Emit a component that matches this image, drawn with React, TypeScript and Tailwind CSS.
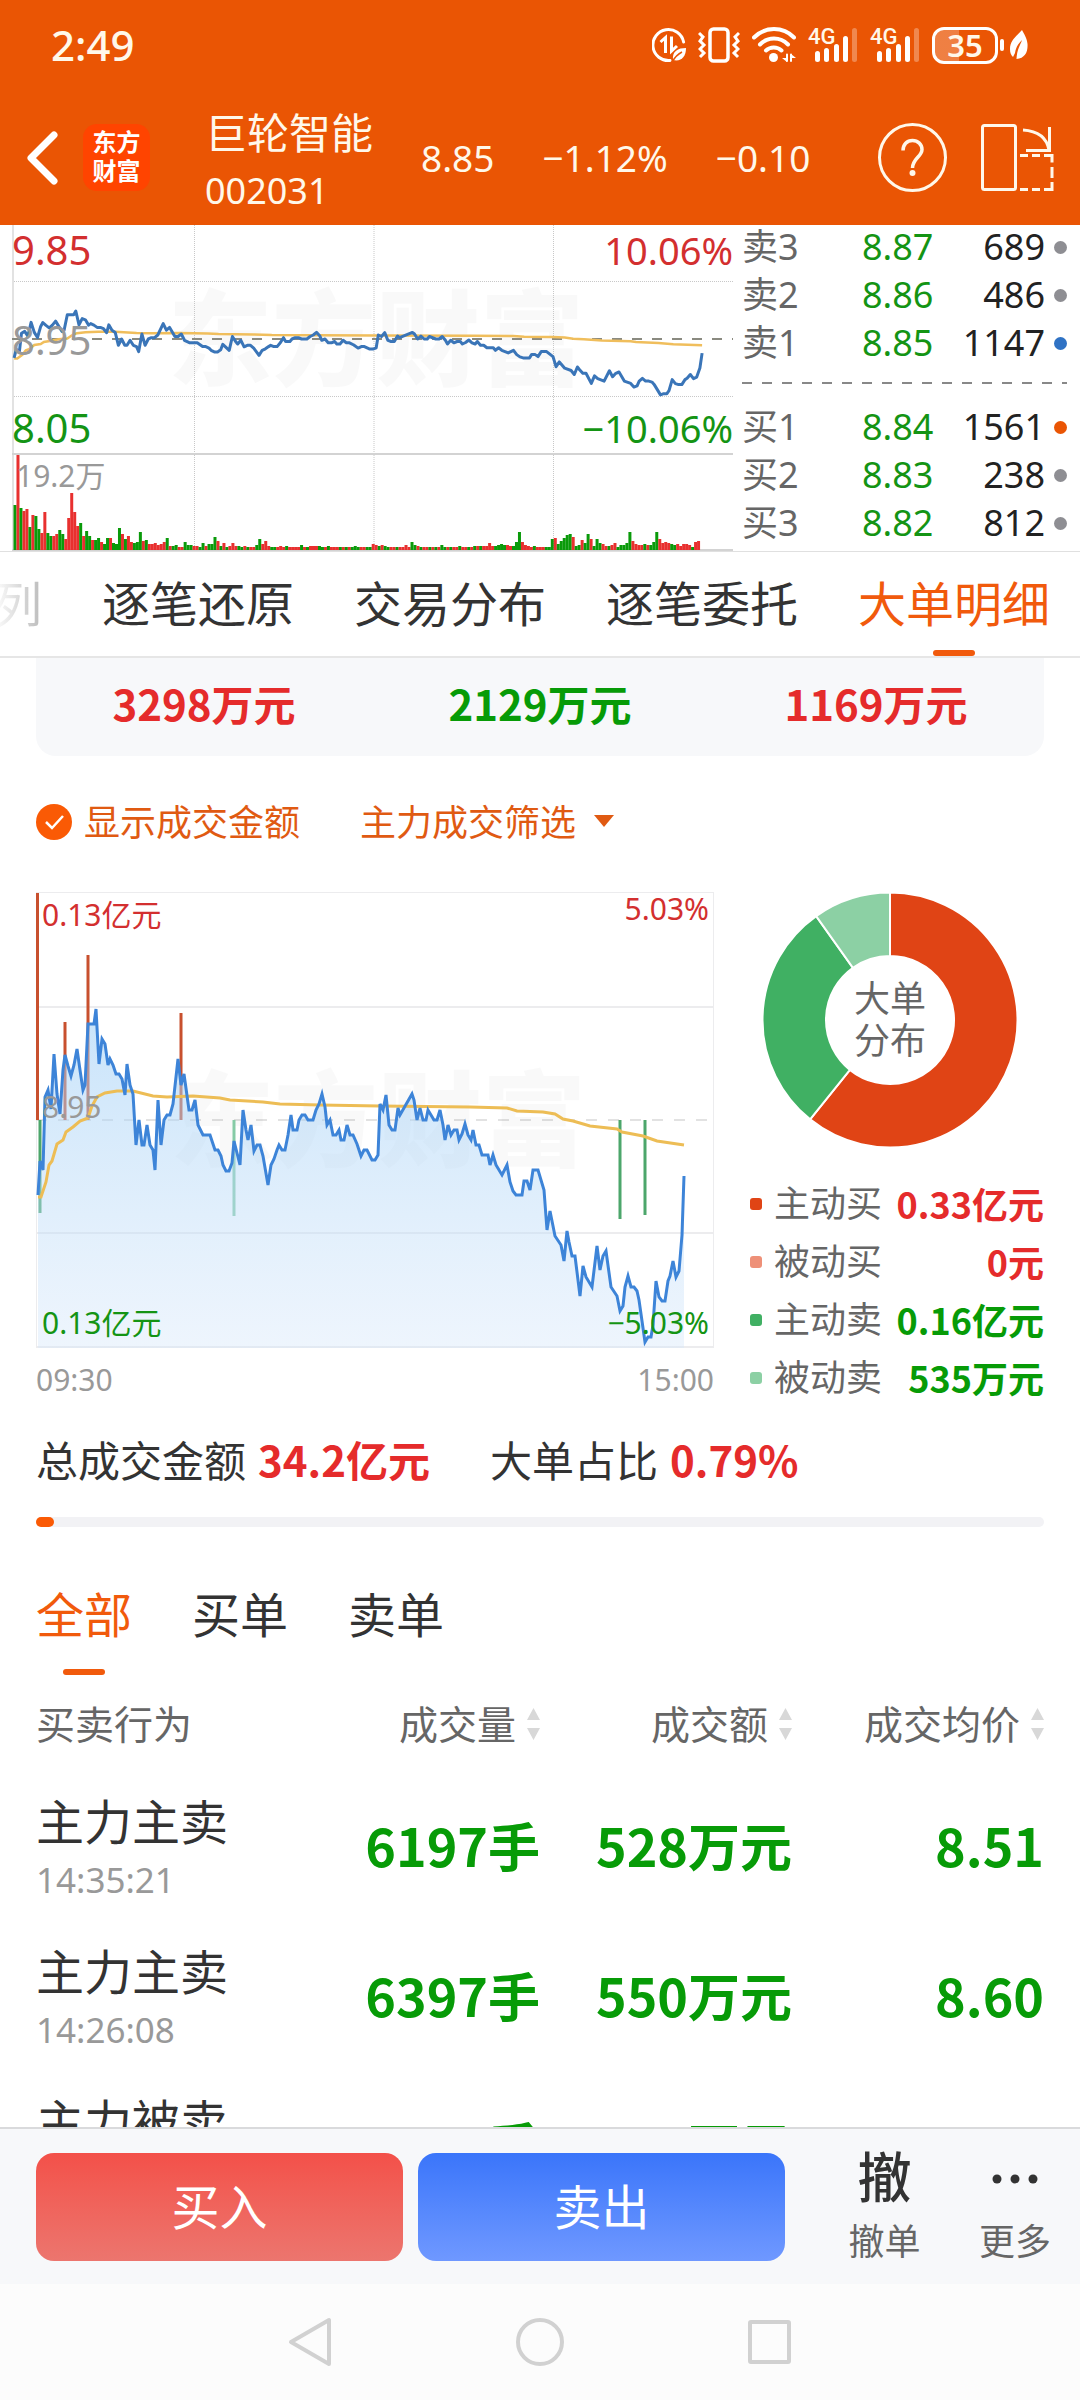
type Point = [number, number];

const CJK = "font-['Noto_Sans_CJK_SC',sans-serif]";

// x offset in the session, distance below the previous close
const price: Point[] = [
  [1, 75], [3, 41], [6, 50], [8, -23], [11, -30], [14, -11], [17, -66], [20, -26], [23, -6], [26, -50],
  [28, -65], [31, -54], [34, -44], [37, -55], [40, -71], [43, -50], [46, -30], [48, -35], [51, -96], [57, -96],
  [59, -111], [62, -56], [65, -81], [68, -76], [71, -55], [73, -61], [76, -55], [79, -46], [82, -46], [85, -41],
  [88, -25], [90, -56], [93, -35], [96, -26], [99, 25], [102, 0], [105, 25], [107, 25], [110, 5], [113, 25],
  [116, 30], [118, 50], [121, -20], [124, 25], [127, 0], [130, -5], [133, -5], [136, -16], [141, -61], [144, -35],
  [147, -46], [152, -10], [155, -10], [158, -20], [161, 5], [166, 15], [173, 15], [178, 30], [181, 30], [184, 36],
  [186, 45], [189, 51], [192, 51], [195, 43], [197, 21], [203, 45], [206, -10], [209, 10], [211, 20], [214, 5],
  [217, 31], [220, 25], [223, 25], [226, 36], [231, 65], [234, 45], [237, 39], [240, 30], [242, 25], [245, 30],
  [248, 30], [251, 15], [254, -5], [256, 10], [260, 10], [262, 0], [265, -5], [268, -5], [271, 0], [276, 0],
  [279, -10], [282, -16], [285, -26], [288, -13], [290, 5], [293, 0], [296, 15], [299, 15], [302, 10], [304, 20],
  [307, 20], [310, 5], [313, 15], [316, 15], [320, 24], [324, 36], [327, 30], [330, 30], [335, 40], [338, 40],
  [341, 35], [343, -16], [346, -10], [349, -25], [352, 5], [355, 10], [358, 10], [361, -12], [363, -5], [375, -26],
  [377, -20], [380, 0], [383, -12], [386, 0], [389, 0], [391, -10], [397, 0], [400, 0], [403, -10], [406, 5],
  [408, 20], [411, 5], [414, 15], [417, 10], [420, 10], [422, 20], [425, 14], [428, 4], [431, 15], [434, 20],
  [436, 10], [439, 25], [442, 25], [445, 35], [451, 35], [453, 45], [456, 35], [459, 45], [465, 55], [470, 45],
  [473, 62], [476, 71], [479, 75], [485, 75], [487, 61], [490, 61], [493, 70], [496, 50], [501, 50], [507, 70],
  [510, 110], [513, 91], [515, 101], [518, 116], [524, 125], [527, 141], [530, 111], [532, 122], [535, 136], [538, 136],
  [543, 176], [546, 146], [549, 157], [555, 167], [560, 126], [563, 150], [566, 136], [569, 131], [574, 167], [580, 176],
  [583, 191], [586, 186], [588, 167], [591, 156], [594, 167], [597, 167], [600, 171], [602, 180], [608, 222], [611, 217],
  [614, 217], [616, 205], [619, 161], [622, 177], [625, 181], [628, 181], [631, 161], [633, 156], [636, 141], [639, 157],
  [642, 151], [645, 115], [647, 56],
];

const average: Point[] = [
  [1, 77], [4, 77], [9, 62], [12, 45], [15, 41], [20, 24], [26, 20], [29, 12], [36, 7], [43, 1], [51, -2],
  [55, -14], [60, -23], [68, -27], [80, -29], [96, -29], [116, -24], [130, -23], [156, -24], [183, -22],
  [193, -20], [226, -18], [243, -16], [283, -15], [343, -14], [433, -13], [470, -12], [480, -9], [506, -8],
  [518, -6], [526, -1], [536, 1], [553, 6], [580, 9], [585, 12], [606, 16], [620, 21], [647, 25],
];

// r = up minute, g = down minute, followed by the bar height
const volume = (
  "g45 r95 g42 r39 r41 g23 r35 g34 g21 r17 r38 g17 g14 r14 r16 g20 g16 r11 r32 r57 r38 r24 g27 r14 g19 g14 r10 g10 g12 r8 " +
  "g6 g12 r12 g7 g6 g22 r16 g11 r14 r8 g7 g8 g18 r9 g10 r6 r6 r7 r5 r6 r8 g12 r4 g4 g5 r3 r3 g8 g5 g5 " +
  "r4 r4 g3 g7 r4 g6 g6 g13 r9 g4 r7 g3 r4 r7 r4 g4 g3 r4 g3 r3 r3 g5 g11 r6 r9 r4 g3 g3 r3 r4 " +
  "r3 g4 r3 r3 r3 r3 g5 r3 g3 r4 r4 r4 g4 g3 r3 g4 r3 r3 r3 g3 r3 g3 r3 g3 g4 g3 r3 r3 g3 g3 " +
  "r6 r5 g4 r5 g4 g3 r3 r3 g3 r3 r3 r5 r3 g8 g5 r4 g3 r3 r3 g3 r3 g3 r3 g5 g3 r3 g3 r3 r3 g4 " +
  "r3 r3 g3 r3 g4 r4 g4 r4 r4 r7 r4 g4 g5 g6 g5 r5 r4 g4 g8 g18 r8 r5 r4 r3 g4 r3 r3 r3 g3 g3 " +
  "g11 r12 g6 g9 g12 g15 g16 r13 g4 g5 r10 g7 g16 r11 g4 g11 g7 r6 r4 g4 r5 r7 g3 g5 g5 g7 g18 r9 r6 r5 " +
  "r5 g6 r5 g5 g8 g18 r11 r7 r8 r7 g6 g5 r6 r4 r6 r6 r5 g3 r8 r9"
).split(" ");

const sells = [
  { label: "卖3", price: "8.87", qty: 689, dot: "bg-[#8e8e93]" },
  { label: "卖2", price: "8.86", qty: 486, dot: "bg-[#8e8e93]" },
  { label: "卖1", price: "8.85", qty: 1147, dot: "bg-[#2f72c4]" },
];

const buys = [
  { label: "买1", price: "8.84", qty: 1561, dot: "bg-[#ea5504]" },
  { label: "买2", price: "8.83", qty: 238, dot: "bg-[#8e8e93]" },
  { label: "买3", price: "8.82", qty: 812, dot: "bg-[#8e8e93]" },
];

const bigOrders = [
  { label: "主动买", value: "0.33亿元", dot: "bg-[#e04415]", color: "text-[#e52b2b]" },
  { label: "被动买", value: "0元", dot: "bg-[#ee9078]", color: "text-[#e52b2b]" },
  { label: "主动卖", value: "0.16亿元", dot: "bg-[#40b063]", color: "text-[#079b07]" },
  { label: "被动卖", value: "535万元", dot: "bg-[#8cd0a4]", color: "text-[#079b07]" },
];

const trades = [
  { name: "主力主卖", time: "14:35:21", qty: "6197手", amount: "528万元", avg: "8.51" },
  { name: "主力主卖", time: "14:26:08", qty: "6397手", amount: "550万元", avg: "8.60" },
  { name: "主力被卖", time: "", qty: "手", amount: "万元", avg: "" },
];

function toLine(points: Point[], x0: number, y0: number, sx: number, sy: number) {
  return points.map(([x, y]) => `${(x0 + x * sx).toFixed(1)},${(y0 + y * sy).toFixed(1)}`).join(" ");
}

function Signal() {
  return (
    <div className="relative h-[36px] w-[50px]">
      <span className="absolute left-0 top-0 font-['Roboto',sans-serif] text-[22px] leading-[20px] font-medium">4G</span>
      <svg viewBox="0 0 50 36" className="h-full w-full" fill="#fff">
        <rect x="7" y="24" width="5" height="11" rx="2.5" />
        <rect x="16" y="21" width="5" height="14" rx="2.5" />
        <rect x="26" y="17" width="5" height="18" rx="2.5" />
        <rect x="35" y="9" width="5" height="26" rx="2.5" />
        <rect x="44" y="1" width="5" height="34" rx="2.5" opacity="0.3" />
      </svg>
    </div>
  );
}

function StatusBar() {
  return (
    <div className="flex h-[90px] items-center justify-between pl-[51px] pr-[52px]">
      <span className="text-[42px] leading-none font-medium">2:49</span>
      <div className="flex items-center gap-3">
        {/* Data saver */}
        <svg viewBox="0 0 34 36" className="h-[36px] w-[34px]" fill="none" stroke="#fff">
          <path d="M18 33.5A15.5 15.5 0 1 1 31.6 15" strokeWidth="3" strokeLinecap="round" />
          <path d="M8.5 15l5-4.500V26" strokeWidth="3" />
          <path d="M19.500 9.500V24l5.500-5" strokeWidth="3" />
          <path d="M34 21c-8 0-14 3-13 12 8 2 13-3 13-12z" fill="#fff" stroke="none" />
          <path d="M20 35c3-5 6-8 10-10" stroke="#ea5504" strokeWidth="1.500" />
        </svg>
        {/* Vibrate */}
        <svg viewBox="0 0 42 36" className="h-[36px] w-[42px]" fill="none" stroke="#fff" strokeWidth="3.500">
          <rect x="12" y="2" width="18" height="32" rx="3.500" />
          <path d="M1 6l4 4-3 4 4 4-4 4 4 4-4 4M41 6l-4 4 3 4-4 4 4 4-4 4 4 4" strokeWidth="3" />
        </svg>
        {/* Wifi */}
        <svg viewBox="0 0 44 36" className="h-[36px] w-[44px]" fill="none" stroke="#fff" strokeWidth="4" strokeLinecap="round">
          <path d="M2 10.500a28 28 0 0 1 40 0M8 17.500a19.500 19.500 0 0 1 28 0M14 23.500a11.500 11.500 0 0 1 15.500 0" />
          <circle cx="21.500" cy="30.500" r="4.500" fill="#fff" stroke="none" />
          <path d="M35 27v8l-5-4h5M39 35v-8l5 4h-5" fill="#fff" stroke="none" />
          <path d="M35 27.500v6.500M39 27.500v6.500" strokeWidth="2" />
        </svg>
        <Signal />
        <Signal />
        {/* Battery */}
        <div className="flex items-center gap-[6px]">
          <div className="flex items-center gap-[2px]">
            <div className="flex h-[37px] w-[66px] items-center justify-center rounded-[12px] border-[3px] border-white bg-linear-to-r from-white/25 from-40% to-transparent to-40% text-[31px] leading-none font-semibold">
              35
            </div>
            <div className="h-[12px] w-[4px] rounded-full bg-white" />
          </div>
          <svg viewBox="0 0 18 30" className="h-[30px] w-[18px]" fill="#fff">
            <path d="M12 0C6 7 0 10 0 19c0 4 1 6 3 8l2-4C6 17 8 14 12 10c-2 6-5 9-5.500 19C15 28 18 22 17.500 14 17 8 14 4 12 0z" />
          </svg>
        </div>
      </div>
    </div>
  );
}

function Header() {
  return (
    <header className="bg-[#ea5504] text-[#fff8ea]">
      <StatusBar />
      <div className="flex h-[135px] items-center pl-[27px] pr-[26px]">
        <button type="button" aria-label="返回">
          <svg viewBox="0 0 31 54" className="h-[54px] w-[31px]" fill="none" stroke="#fff" strokeWidth="7" strokeLinecap="round" strokeLinejoin="round">
            <path d="M27 4L4 27l23 23" />
          </svg>
        </button>
        <div className={`ml-[25px] flex size-[67px] flex-col items-center justify-center rounded-[14px] bg-[#ff4400] pb-[6px] text-[24px] leading-[29px] font-bold text-white ${CJK}`}>
          <span>东方</span>
          <span>财富</span>
        </div>
        <div className="ml-[55px] flex flex-col pt-2">
          <h1 className="text-[42px] leading-[58px]">巨轮智能</h1>
          <span className="text-[36px] leading-[58px]">002031</span>
        </div>
        <div className="ml-[48px] flex gap-12 text-[37px] leading-none">
          <span>8.85</span>
          <span>−1.12%</span>
          <span>−0.10</span>
        </div>
        <div className="ml-auto flex items-center gap-[34px]">
          <button type="button" aria-label="帮助">
            <svg viewBox="0 0 69 69" className="size-[69px]" fill="none" stroke="#fff8ea" strokeWidth="3">
              <circle cx="34.500" cy="34.500" r="33" />
              <path d="M25 27.500c0-6 4-10 9.500-10s9.500 4 9.500 9c0 7-9.500 9-9.500 18.500" strokeWidth="3.500" />
              <circle cx="34.500" cy="50" r="3" fill="#fff8ea" stroke="none" />
            </svg>
          </button>
          <button type="button" aria-label="横屏">
            <svg viewBox="0 0 73 67" className="h-[67px] w-[73px]" fill="none" stroke="#fff8ea" strokeWidth="3">
              <rect x="1.500" y="1.500" width="33" height="64" rx="2" />
              <path d="M42 6c16 1 24 9 26 20M68.500 3v23.500H45" />
              <path d="M39 31.500h8M51 31.500h8M63 31.500h8v7M71 43v11M71 58v7.500h-8M59 65.500h-8M47 65.500h-8" />
            </svg>
          </button>
        </div>
      </div>
    </header>
  );
}

function Watermark({ x, y }: { x: number; y: number }) {
  return (
    <text x={x} y={y} fontSize="104" fontWeight="900" fill="#000" fillOpacity="0.025" className={CJK}>
      东方财富
    </text>
  );
}

function MinuteChart() {
  return (
    <div className="relative h-[326px] overflow-hidden text-[40px] leading-[48px]">
      <svg viewBox="0 0 733 326" preserveAspectRatio="none" className="h-full w-full" fill="none">
        <Watermark x={168} y={153} />
        <path d="M12 56.500H733M12 171.500H733M194.500 0V326M374 0V326M553.500 0V326" stroke="#c8c8c8" strokeDasharray="1 1" />
        <path d="M13 0V326" stroke="#e2e2e2" strokeWidth="2" />
        <path d="M12 229H733M12 325H733" stroke="#d3d3d3" strokeWidth="2" />
        <path d="M12 114H733" stroke="#8a8a80" strokeWidth="2" strokeDasharray="10 10" />
        {volume.map((bar, i) => {
          const h = Number(bar.slice(1));
          return <rect key={i} x={13.500 + i * 2.985} y={325 - h} width="3" height={h} fill={bar[0] === "r" ? "#e8302f" : "#0a9a0a"} />;
        })}
        <polyline points={toLine(average, 13, 114, 1.065, 0.252)} stroke="#f0be5c" strokeWidth="2.500" />
        <polyline points={toLine(price, 13, 114, 1.065, 0.252)} stroke="#3a75b8" strokeWidth="3" strokeLinejoin="round" />
      </svg>
      <span className="absolute left-[12px] top-[1px] text-[#d32f2f]">9.85</span>
      <span className="absolute left-[12px] top-[91px] text-[#999]">8.95</span>
      <span className="absolute left-[12px] top-[179px] text-[#149414]">8.05</span>
      <span className="absolute right-0 top-[1px] text-[38px] text-[#d32f2f]">10.06%</span>
      <span className="absolute right-0 top-[179px] text-[38px] text-[#149414]">−10.06%</span>
      <span className="absolute left-[16px] top-[227px] text-[30px] text-[#999]">19.2万</span>
    </div>
  );
}

function BookRow({ row }: { row: (typeof sells)[number] }) {
  return (
    <div className="grid h-[48px] shrink-0 grid-cols-[120px_auto_1fr_22px] items-center">
      <span className="text-[#666]">{row.label}</span>
      <span className="text-[#149414]">{row.price}</span>
      <span className="text-right text-[#222]">{row.qty}</span>
      <span className={`size-[13px] justify-self-end rounded-full ${row.dot}`} />
    </div>
  );
}

function OrderBook() {
  return (
    <div className="pl-[9px] pr-[13px] text-[36px] leading-[48px]">
      <div className="flex h-[142px] flex-col justify-end overflow-hidden">
        {sells.map((row) => (
          <BookRow key={row.label} row={row} />
        ))}
      </div>
      <svg className="h-[36px] w-full" fill="none">
        <line x1="0" y1="16" x2="100%" y2="16" stroke="#888" strokeWidth="2" strokeDasharray="10 10" />
      </svg>
      {buys.map((row) => (
        <BookRow key={row.label} row={row} />
      ))}
    </div>
  );
}

function SectionTabs() {
  return (
    <nav className="flex h-[106px] justify-end gap-[60px] overflow-hidden border-b-2 border-[#e6e6e6] pr-[30px] text-[48px] leading-[104px] whitespace-nowrap text-[#333]">
      <button type="button" className="bg-linear-to-r from-white to-[#bbb] bg-clip-text text-transparent">列</button>
      <button type="button">逐笔还原</button>
      <button type="button">交易分布</button>
      <button type="button">逐笔委托</button>
      <button type="button" className="relative text-[#f15a0c]">
        大单明细
        <span className="absolute bottom-0 left-1/2 h-[6px] w-[42px] -translate-x-1/2 rounded-full bg-[#f15a0c]" />
      </button>
    </nav>
  );
}

function BigOrderChart() {
  return (
    <div>
      <div className="relative text-[30px] leading-[40px]">
        <svg viewBox="0 0 678 456" preserveAspectRatio="none" className="h-[456px] w-full" fill="none">
          <defs>
            <linearGradient id="area" x1="0" y1="0" x2="0" y2="1">
              <stop offset="0" stopColor="#9bcdf6" stopOpacity="0.550" />
              <stop offset="1" stopColor="#d4e6fa" stopOpacity="0.400" />
            </linearGradient>
          </defs>
          <rect x="0.500" y="0.500" width="677" height="455" stroke="#ececee" />
          <path d="M0 455H678M0 115H678M0 341H678" stroke="#ececee" strokeWidth="2" />
          <path d="M0 228H678" stroke="#e2e2e2" strokeWidth="2" strokeDasharray="11 11" />
          <Watermark x={134} y={267} />
          <path d="M1.500 1V228M29 130V228M52 63V228M145 121V228" stroke="#c8502e" strokeWidth="3" />
          <path d="M4 228V321M584 228V327M609 228V323" stroke="#4ca66b" strokeWidth="3" />
          <path d="M198 228V324" stroke="#86cba6" strokeWidth="3" />
          <polygon points={`2,456 ${toLine(price, 1, 228, 1, 1)} 648,456`} fill="url(#area)" />
          <polyline points={toLine(average, 1, 228, 1, 1)} stroke="#edbd55" strokeWidth="3" />
          <polyline points={toLine(price, 1, 228, 1, 1)} stroke="#3d84d8" strokeWidth="3" />
        </svg>
        <span className="absolute left-[6px] top-[3px] text-[#d32f2f]">0.13亿元</span>
        <span className="absolute left-[6px] top-[195px] text-[#999]">8.95</span>
        <span className="absolute bottom-[5px] left-[6px] text-[#149414]">0.13亿元</span>
        <span className="absolute right-[5px] top-[-3px] text-[#d32f2f]">5.03%</span>
        <span className="absolute right-[5px] bottom-[5px] text-[#149414]">−5.03%</span>
      </div>
      <div className="mt-3 flex justify-between text-[30px] leading-[40px] text-[#999]">
        <span>09:30</span>
        <span>15:00</span>
      </div>
    </div>
  );
}

function slice(from: number, to: number, color: string) {
  const at = (r: number, deg: number) => {
    const a = (deg * Math.PI) / 180;
    return `${(128 + r * Math.sin(a)).toFixed(2)} ${(128 - r * Math.cos(a)).toFixed(2)}`;
  };
  const large = to - from > 180 ? 1 : 0;
  const d = `M${at(127.5, from)}A127.500 127.500 0 ${large} 1 ${at(127.5, to)}L${at(64, to)}A64 64 0 ${large} 0 ${at(64, from)}Z`;
  return <path d={d} fill={color} stroke="#fff" strokeWidth="2" />;
}

function Distribution() {
  return (
    <div>
      <div className="relative ml-[12px] size-[256px]">
        <svg viewBox="0 0 256 256" className="size-full">
          {slice(0, 218.8, "#e04415")}
          {slice(218.8, 324.6, "#40b063")}
          {slice(324.6, 360, "#8cd0a4")}
        </svg>
        <div className="absolute inset-0 flex flex-col items-center justify-center text-[36px] leading-[42px] text-[#666]">
          <span>大单</span>
          <span>分布</span>
        </div>
      </div>
      <ul className="mt-[27px]">
        {bigOrders.map((item) => (
          <li key={item.label} className="flex h-[58px] items-center text-[36px] leading-[58px] whitespace-nowrap">
            <span className={`size-[12px] rounded-[3px] ${item.dot}`} />
            <span className="ml-[12px] text-[#666]">{item.label}</span>
            <span className={`ml-auto pb-[2px] leading-[54px] font-bold ${CJK} ${item.color}`}>{item.value}</span>
          </li>
        ))}
      </ul>
    </div>
  );
}

function SortIcon() {
  return (
    <svg viewBox="0 0 13 32" className="h-[32px] w-[13px]" fill="#d8d8d8">
      <path d="M6.500 0L13 12H0zM6.500 32L13 20H0z" />
    </svg>
  );
}

function TradeTable() {
  return (
    <table className="w-full table-fixed">
      <thead>
        <tr className="h-[98px] text-[39px] leading-[48px] text-[#666]">
          <th className="text-left font-normal">买卖行为</th>
          {["成交量", "成交额", "成交均价"].map((title) => (
            <th key={title} className="font-normal">
              <button type="button" className="ml-auto flex items-center gap-[11px]">
                {title}
                <SortIcon />
              </button>
            </th>
          ))}
        </tr>
      </thead>
      <tbody>
        {trades.map((t, i) => (
          <tr key={i} className={`h-[150px] text-right text-[52px] leading-[60px] font-bold whitespace-nowrap text-[#079b07] ${CJK}`}>
            <td className="pt-[6px] text-left font-['Noto_Sans','Noto_Sans_CJK_SC',sans-serif] font-normal">
              <div className="text-[48px] leading-[58px] text-[#333]">{t.name}</div>
              <div className="h-[58px] text-[35px] leading-[58px] text-[#999]">{t.time}</div>
            </td>
            <td className="pb-[6px]">{t.qty}</td>
            <td className="pb-[6px]">{t.amount}</td>
            <td className="pb-[6px]">{t.avg}</td>
          </tr>
        ))}
      </tbody>
    </table>
  );
}

function Footer() {
  return (
    <footer>
      <div className="flex h-[157px] items-center border-t-2 border-[#d9dadc] bg-[#f7f8fa] pl-[36px] text-[#333]">
        <div className="flex flex-1 gap-[15px] text-[48px] text-white">
          <button type="button" className="h-[108px] flex-1 rounded-[18px] bg-linear-to-b from-[#f35049] to-[#ec756e]">买入</button>
          <button type="button" className="h-[108px] flex-1 rounded-[18px] bg-linear-to-b from-[#3a75fa] to-[#6f98ff]">卖出</button>
        </div>
        <button type="button" className="ml-[34px] flex w-[131px] flex-col items-center pt-1">
          <span className="text-[54px] leading-[66px] font-medium">撤</span>
          <span className="text-[36px] leading-[64px] text-[#666]">撤单</span>
        </button>
        <button type="button" className="flex w-[130px] flex-col items-center pt-1">
          <svg viewBox="0 0 46 66" className="h-[66px] w-[46px]" fill="#333">
            <circle cx="5" cy="35" r="4.500" />
            <circle cx="23" cy="35" r="4.500" />
            <circle cx="41" cy="35" r="4.500" />
          </svg>
          <span className="text-[36px] leading-[64px] text-[#666]">更多</span>
        </button>
      </div>
      <div className="flex h-[116px] items-center justify-center gap-[182px] bg-[#fcfcfc]">
        <svg viewBox="0 0 48 50" className="h-[50px] w-[48px]" fill="none" stroke="#d1d1d1" strokeWidth="4" strokeLinejoin="round">
          <path d="M43 3v44L5 25z" />
        </svg>
        <svg viewBox="0 0 48 48" className="size-[48px]" fill="none" stroke="#d1d1d1" strokeWidth="4">
          <circle cx="24" cy="24" r="22" />
        </svg>
        <svg viewBox="0 0 48 48" className="size-[48px]" fill="none" stroke="#d1d1d1" strokeWidth="4">
          <rect x="4" y="4" width="39" height="40" rx="1" />
        </svg>
      </div>
    </footer>
  );
}

export default function App() {
  return (
    <div className="flex h-screen flex-col overflow-hidden bg-white font-['Noto_Sans','Noto_Sans_CJK_SC',sans-serif]" lang="zh-CN">
      <Header />
      <main className="min-h-0 flex-1 overflow-hidden">
        <section className="grid grid-cols-[733fr_347fr] border-b border-[#e0e0e0]">
          <MinuteChart />
          <OrderBook />
        </section>
        <SectionTabs />

        <div className="px-[36px]">
          {/* Totals */}
          <div className={`grid grid-cols-3 rounded-b-[20px] bg-[#f7f8fa] pt-[15px] pb-[23px] text-center text-[42px] leading-[60px] font-bold ${CJK}`}>
            <span className="text-[#e52b2b]">3298万元</span>
            <span className="text-[#079b07]">2129万元</span>
            <span className="text-[#e52b2b]">1169万元</span>
          </div>

          {/* Filters */}
          <div className="mt-9 flex h-[60px] items-center gap-[60px] text-[36px] leading-[60px] text-[#e05a12]">
            <label className="flex items-center gap-3">
              <span className="relative size-[36px]">
                <input type="checkbox" defaultChecked className="block size-full appearance-none rounded-full bg-[#fa5a05]" />
                <svg viewBox="0 0 36 36" className="pointer-events-none absolute inset-0 size-full" fill="none" stroke="#fff" strokeWidth="2.500">
                  <path d="M10 18l6 6 11-12" />
                </svg>
              </span>
              <span className="pt-[2px]">显示成交金额</span>
            </label>
            <div className="relative">
              <select aria-label="主力成交筛选" className="w-[254px] appearance-none pt-[2px]">
                <option>主力成交筛选</option>
              </select>
              <svg viewBox="0 0 20 12" className="pointer-events-none absolute right-0 top-[24px] h-[12px] w-[20px]" fill="#e05a12">
                <path d="M0 0h20L10 12z" />
              </svg>
            </div>
          </div>

          {/* Charts */}
          <div className="mt-10 grid grid-cols-[678fr_294fr] gap-[36px]">
            <BigOrderChart />
            <Distribution />
          </div>

          {/* Share of turnover */}
          <div className="mt-6 flex gap-[60px] text-[42px] leading-[60px] whitespace-nowrap text-[#333]">
            <div className="flex gap-3">
              总成交金额
              <span className={`leading-[56px] font-bold text-[#e52b2b] ${CJK}`}>34.2亿元</span>
            </div>
            <div className="flex gap-3">
              大单占比
              <span className={`leading-[56px] font-bold text-[#e52b2b] ${CJK}`}>0.79%</span>
            </div>
          </div>
          <div className="mt-[26px] h-[10px] rounded-full bg-[#f2f2f5]">
            <div className="h-full w-[18px] rounded-full bg-[#fa5a05]" />
          </div>

          {/* Order type tabs */}
          <div className="mt-[58px] flex gap-[60px] text-[48px] leading-[60px] text-[#333]">
            <button type="button" className="flex flex-col items-center gap-6 text-[#f15a0c]">
              全部
              <span className="h-[6px] w-[42px] rounded-full bg-[#f15a0c]" />
            </button>
            <button type="button" className="self-start">买单</button>
            <button type="button" className="self-start">卖单</button>
          </div>
          <TradeTable />
        </div>
      </main>
      <Footer />
    </div>
  );
}
